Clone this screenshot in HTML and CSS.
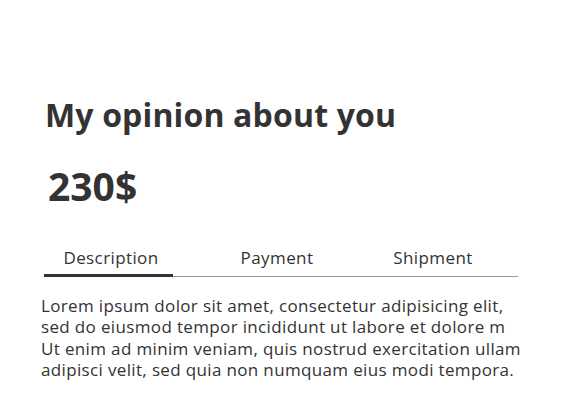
FILE: index.html
```html
<!DOCTYPE html>
<html>
<head>
<meta charset="utf-8">
<link rel="stylesheet" href="styles.css">
</head>
<body>
<main class="product">
  <h1 class="title">My opinion about you</h1>
  <div class="price">230$</div>
  <nav class="tabs">
    <span class="tab tab-active">Description</span>
    <span class="tab tab-payment">Payment</span>
    <span class="tab tab-shipment">Shipment</span>
  </nav>
  <div class="desc">
    <p class="line">Lorem ipsum dolor sit amet, consectetur adipisicing elit,</p>
    <p class="line">sed do eiusmod tempor incididunt ut labore et dolore m</p>
    <p class="line">Ut enim ad minim veniam, quis nostrud exercitation ullam</p>
    <p class="line">adipisci velit, sed quia non numquam eius modi tempora.</p>
  </div>
</main>
</body>
</html>
```
FILE: styles.css
```css
html, body {
  margin: 0;
  padding: 0;
  background: #fff;
}
body {
  font-family: "Open Sans", "Lato", sans-serif;
  color: #333;
}
.product {
  width: 477px;
  padding: 96px 0 0 41px;
}
.title {
  margin: 0 0 0 4px;
  font-size: 32px;
  font-weight: 700;
  line-height: 38px;
  letter-spacing: 0.15px;
}
.price {
  margin: 30px 0 0 7px;
  font-size: 39px;
  font-weight: 700;
  line-height: 44px;
}
.tabs {
  display: flex;
  margin: 38px 0 0 3px;
  border-bottom: 1px solid #999;
  font-size: 17px;
  letter-spacing: 0.4px;
}
.tab {
  box-sizing: border-box;
  padding: 0 0 5px;
  text-align: center;
}
.tab-active {
  width: 129px;
  padding-left: 5px;
  border-bottom: 3px solid #333;
  margin-bottom: -1px;
}
.tab-payment {
  margin-left: 47px;
  width: 114px;
}
.tab-shipment {
  margin-left: 39px;
  width: 120px;
}
.desc {
  margin-top: 18px;
  font-size: 17px;
  line-height: 21.3px;
  letter-spacing: 0.35px;
}
.line {
  margin: 0;
  white-space: nowrap;
}
```
